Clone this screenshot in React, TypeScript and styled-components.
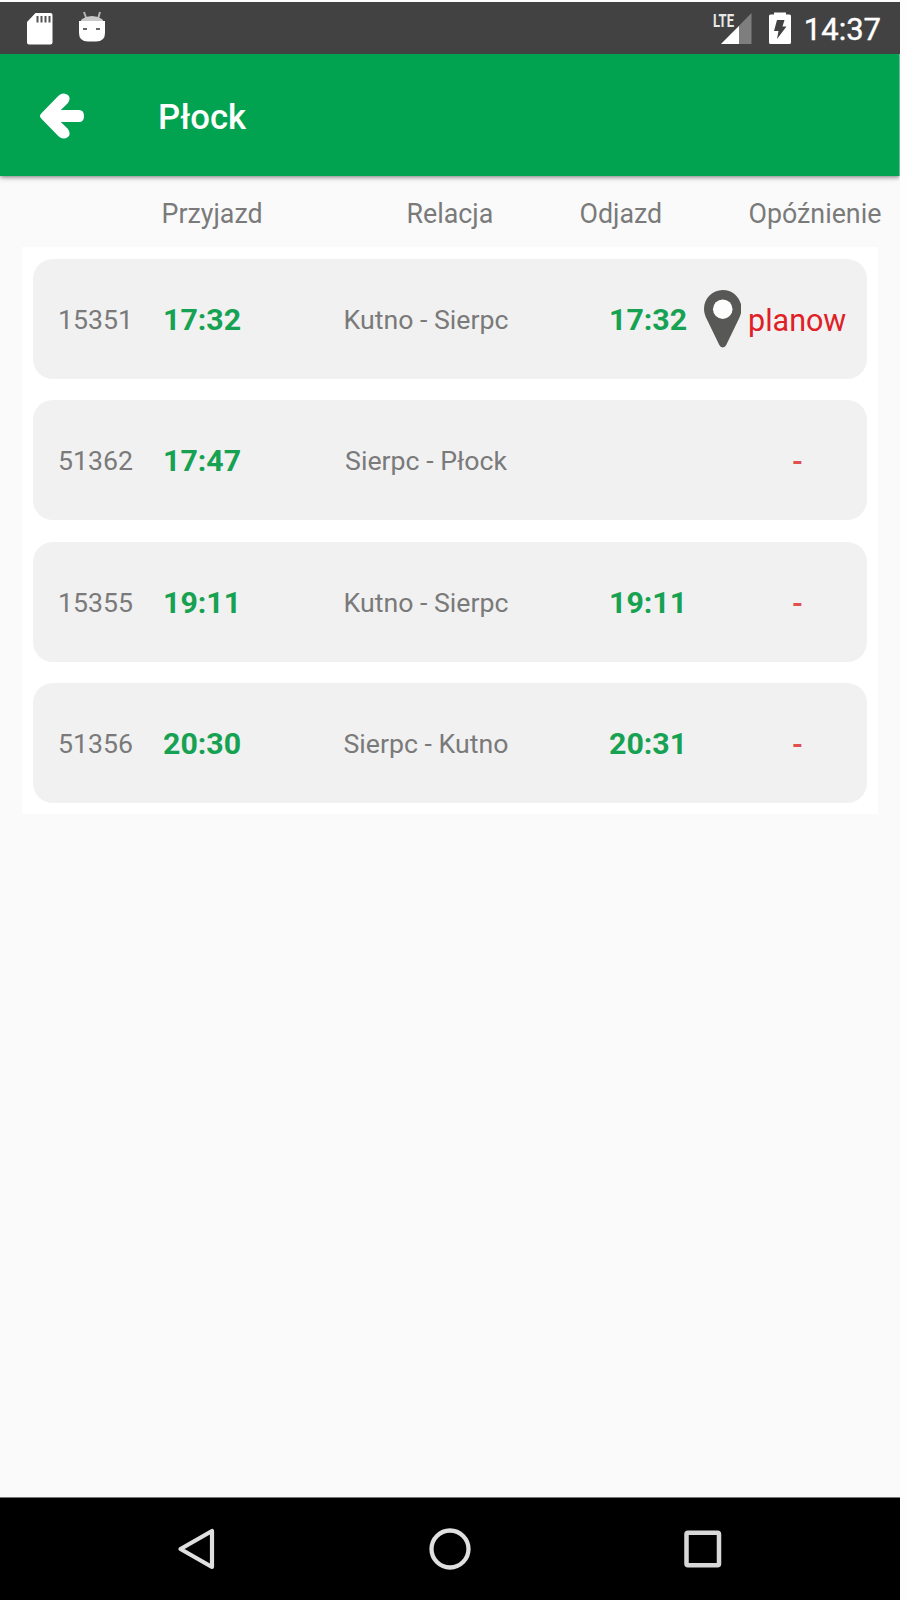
import React from "react";
import styled, { createGlobalStyle } from "styled-components";

const GlobalStyle = createGlobalStyle`
  * { box-sizing: border-box; }
  body { margin: 0; background: #ffffff; }
`;

const Screen = styled.div`
  width: 907px;
  height: 1600px;
  padding: 2px 7px 0 0;
  background: #fefefe;
  font-family: Roboto, "Liberation Sans", sans-serif;
  overflow: hidden;
`;

const Phone = styled.div`
  display: flex;
  flex-direction: column;
  width: 899.5px;
  height: 1598px;
  background: #fafafa;
`;

const StatusBar = styled.div`
  display: flex;
  align-items: center;
  height: 52px;
  flex: none;
  padding: 0 18.5px 0 26px;
  background: #424242;
  color: #ffffff;
`;

const StatusIcons = styled.div`
  display: flex;
  gap: 24px;
  flex: 1;
`;

const SignalIcons = styled.div`
  display: flex;
  gap: 16px;
  margin-right: 13px;
`;

const Clock = styled.span`
  padding-top: 3px;
  font-size: 31px;
  line-height: 49px;
  -webkit-text-stroke: 0.4px #ffffff;
`;

const AppBar = styled.header`
  display: flex;
  align-items: center;
  flex: none;
  height: 122px;
  padding: 2px 0 0 38px;
  background: #01a350;
  box-shadow: 0 1px 5px rgba(0, 0, 0, 0.55);
  clip-path: inset(0 0 -12px 0);
`;

const Title = styled.h1`
  margin: 2px 0 0 73px;
  color: #ffffff;
  font-size: 34.7px;
  line-height: 44px;
  font-weight: 500;
`;

const Content = styled.main`
  flex: 1;
`;

const HeaderRow = styled.div`
  display: grid;
  grid-template-columns: 245px 173px 169px 1fr;
  height: 71px;
  padding: 21px 0 0 161.5px;
  color: #7a7a7a;
  font-size: 26.8px;
  line-height: 34px;
`;

const Panel = styled.section`
  display: flex;
  flex-direction: column;
  gap: 21.7px;
  width: 856px;
  margin-left: 22px;
  padding: 11.8px 11px 10.6px;
  background: #ffffff;
`;

const Card = styled.article`
  display: grid;
  grid-template-columns: 105px 153px 220px 73px 99px 40px 96px;
  align-items: center;
  height: 119.8px;
  padding: 2px 0 0 25px;
  border-radius: 20px;
  background: #f1f1f1;
`;

const Label = styled.span<{ $center?: boolean }>`
  color: #7a7a7a;
  font-size: 26.7px;
  line-height: 34px;
  white-space: nowrap;
  text-align: ${(p) => (p.$center ? "center" : "left")};
`;

const Time = styled.span`
  color: #16a252;
  font-size: 30.3px;
  line-height: 36px;
  font-weight: 700;
`;

const Departure = styled(Time)`
  grid-column: 5;
`;

const Delay = styled.span<{ $empty: boolean }>`
  grid-column: 7;
  padding: 2px 0 0 ${(p) => (p.$empty ? "3px" : "0")};
  color: ${(p) => (p.$empty ? "#e0504e" : "#df2026")};
  font-size: 30.5px;
  line-height: 36px;
  font-weight: ${(p) => (p.$empty ? 500 : 400)};
  text-align: center;
`;

const NavBar = styled.nav`
  display: flex;
  align-items: center;
  justify-content: space-between;
  flex: none;
  height: 103px;
  padding: 0 178px 0 176px;
  border-top: 1px solid #777777;
  background: #000000;
`;

const SdCardIcon = () => (
  <svg width="28" height="34" viewBox="0 0 28 34">
    <path d="M9.500 2H24.500Q26.500 2 26.500 4V31.500Q26.500 33.500 24.500 33.500H3Q1 33.500 1 31.500V11Z" fill="#fff" />
    <path d="M11.500 5V11.500M15.500 5V11.500M19.500 5V11.500M23.500 5V11.500" stroke="#555" strokeWidth="2" />
  </svg>
);

const DroidIcon = () => (
  <svg width="28" height="34" viewBox="0 0 28 34">
    <path d="M6 1L8.500 8M22 1L20 8" stroke="#b5b5b5" strokeWidth="2" />
    <path d="M4 8Q14 2 24 8L26 11H2Z" fill="#c9c9c9" />
    <path d="M1 10H27V22Q27 30.500 18 30.500H10Q1 30.500 1 22Z" fill="#fff" />
    <path d="M5 18H9M18 18H22" stroke="#666" strokeWidth="2" />
  </svg>
);

const LteText = styled.text`
  font-family: Roboto, sans-serif;
  font-size: 19px;
  font-weight: 700;
`;

const SignalSvg = styled.svg`
  overflow: visible;
`;

const SignalIcon = () => (
  <SignalSvg width="40" height="34" viewBox="0 0 40 34">
    <path d="M8 33L38.500 2V33Z" fill="#7e7e7e" />
    <path d="M8 33L26 15V33Z" fill="#fff" />
    <LteText x="0" y="16" textLength="21" lengthAdjust="spacingAndGlyphs" fill="#e8e8e8">LTE</LteText>
  </SignalSvg>
);

const BatteryIcon = () => (
  <svg width="22" height="34" viewBox="0 0 22 34">
    <path d="M0 5Q0 3.500 1.500 3.500H5V1.500H17V3.500H20.500Q22 3.500 22 5V31.500Q22 33 20.500 33H1.500Q0 33 0 31.500Z" fill="#fff" />
    <path d="M8 9H15.500L13.500 15.500H17.500L8 28L9.500 20H5Z" fill="#424242" />
  </svg>
);

const BackArrow = () => (
  <svg width="47" height="46" viewBox="0 0 47 46">
    <path
      d="M3.200 20.500L20.500 2.800Q25 -1.500 30 2Q33.500 5.500 29.500 10.500L22.800 17H41Q46 17 46 23T41 29H22.800L29.500 35.500Q33.500 40.500 30 44Q25 47.500 20.500 43.200L3.200 25.500Q0.800 23 3.200 20.500Z"
      fill="#fff"
    />
  </svg>
);

const PinSvg = styled.svg`
  grid-column: 6;
  margin: -1px 0 0 -4.5px;
`;

const PinIcon = () => (
  <PinSvg width="37.5" height="58" viewBox="0 0 38 59" preserveAspectRatio="none">
    <path
      d="M19 0C8.500 0 0 8.500 0 19C0 23 1.200 26.500 3 30L15.500 56Q16.500 58.500 19 58.500T22.500 56L35 30C36.800 26.500 38 23 38 19C38 8.500 29.500 0 19 0Z"
      fill="#585856"
    />
    <circle cx="19" cy="19.500" r="9.900" fill="#fdfdfd" />
  </PinSvg>
);

const NavBack = () => (
  <svg width="42" height="44" viewBox="0 0 42 44">
    <path d="M4.500 22L36 4V40Z" fill="none" stroke="#e0e0e0" strokeWidth="4.200" strokeLinejoin="round" />
  </svg>
);

const NavHome = () => (
  <svg width="44" height="44" viewBox="0 0 44 44">
    <circle cx="22" cy="22" r="18.500" fill="none" stroke="#e0e0e0" strokeWidth="4.300" />
  </svg>
);

const NavRecent = () => (
  <svg width="40" height="44" viewBox="0 0 40 44">
    <rect x="4.500" y="5.800" width="32.500" height="32.500" rx="1.500" fill="none" stroke="#d8d8d8" strokeWidth="4.500" />
  </svg>
);

interface Train {
  number: string;
  arrival: string;
  route: string;
  departure?: string;
  delay: string;
  located?: boolean;
}

const trains: Train[] = [
  { number: "15351", arrival: "17:32", route: "Kutno - Sierpc", departure: "17:32", delay: "planow", located: true },
  { number: "51362", arrival: "17:47", route: "Sierpc - Płock", delay: "-" },
  { number: "15355", arrival: "19:11", route: "Kutno - Sierpc", departure: "19:11", delay: "-" },
  { number: "51356", arrival: "20:30", route: "Sierpc - Kutno", departure: "20:31", delay: "-" },
];

export default function App() {
  return (
    <Screen>
      <GlobalStyle />
      <Phone>
        <StatusBar>
          <StatusIcons>
            <SdCardIcon />
            <DroidIcon />
          </StatusIcons>
          <SignalIcons>
            <SignalIcon />
            <BatteryIcon />
          </SignalIcons>
          <Clock>14:37</Clock>
        </StatusBar>
        <AppBar>
          <BackArrow />
          <Title>Płock</Title>
        </AppBar>
        <Content>
          <HeaderRow>
            <span>Przyjazd</span>
            <span>Relacja</span>
            <span>Odjazd</span>
            <span>Opóźnienie</span>
          </HeaderRow>
          <Panel>
            {trains.map((t) => (
              <Card key={t.number}>
                <Label>{t.number}</Label>
                <Time>{t.arrival}</Time>
                <Label $center>{t.route}</Label>
                {t.departure && <Departure>{t.departure}</Departure>}
                {t.located && <PinIcon />}
                <Delay $empty={t.delay === "-"}>{t.delay}</Delay>
              </Card>
            ))}
          </Panel>
        </Content>
        <NavBar>
          <NavBack />
          <NavHome />
          <NavRecent />
        </NavBar>
      </Phone>
    </Screen>
  );
}
